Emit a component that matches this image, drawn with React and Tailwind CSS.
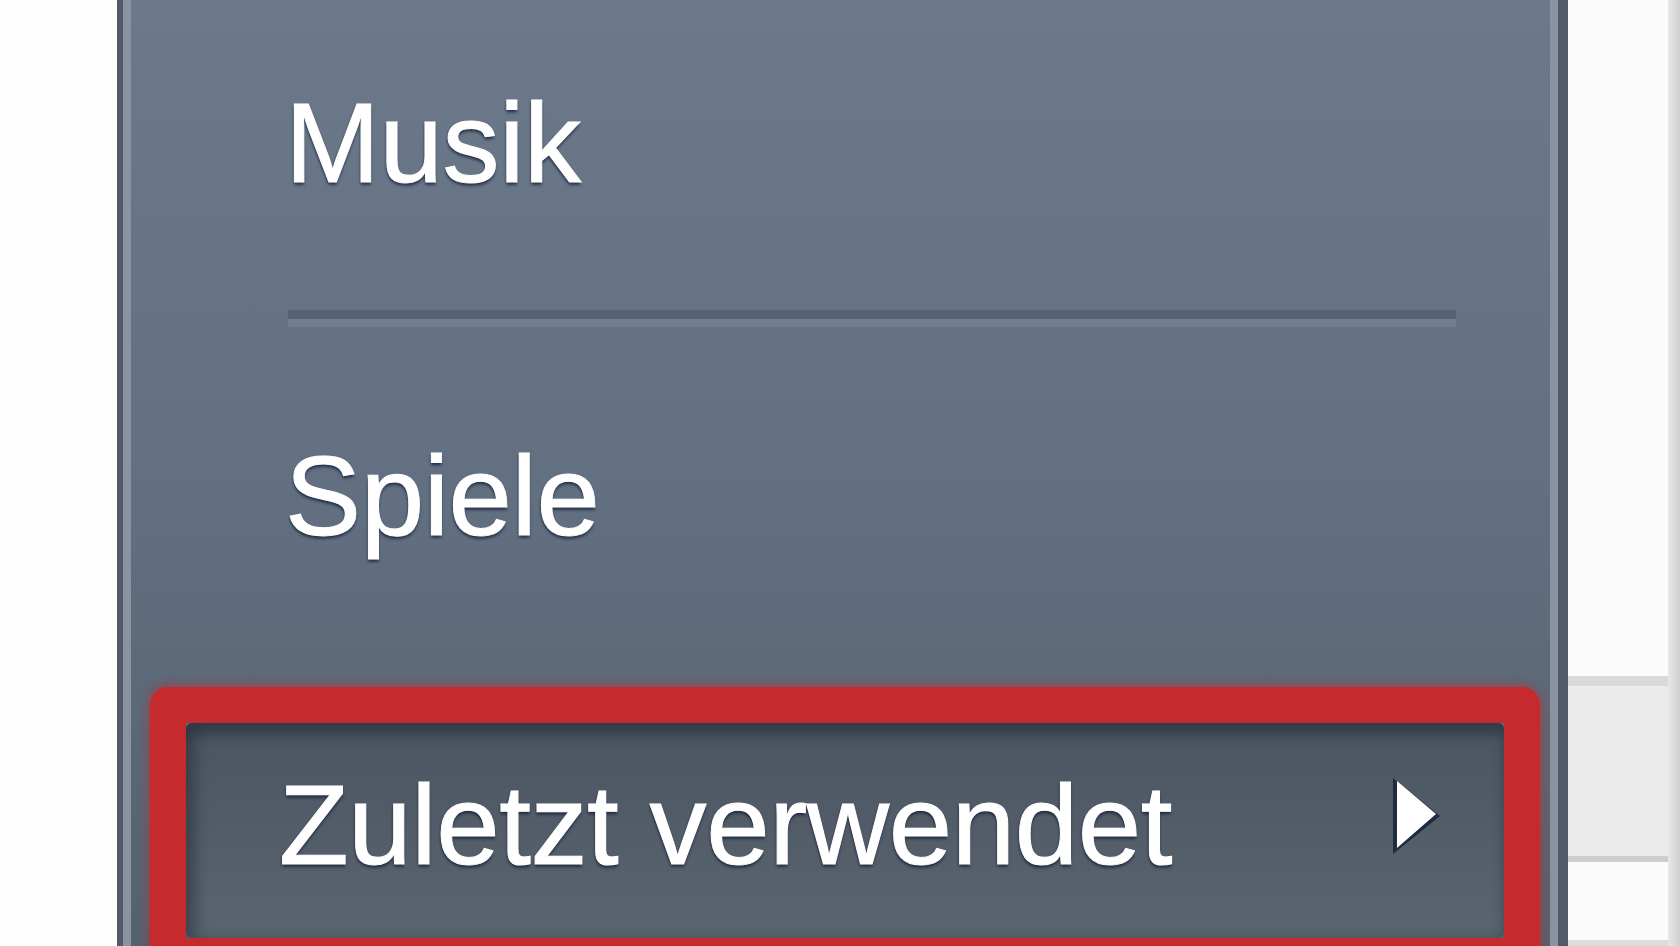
import React from "react";

const textShadow = "[text-shadow:0_3px_3px_rgba(12,22,48,0.6),-1px_1px_2px_rgba(12,22,48,0.4)] [-webkit-text-stroke:1px_#ffffff]";

export default function App() {
  return (
    <div className="w-[1680px] h-[946px] overflow-hidden flex bg-white font-['Liberation_Sans',Arial,sans-serif]">
      {/* left backdrop */}
      <div className="w-[117px] shrink-0 bg-[#fdfdfd]" />

      {/* start menu panel */}
      <div className="w-[1451px] shrink-0 h-full border-l-[6px] border-r-[10px] border-y-0 border-solid border-[#515a68]">
        <div className="h-full border-l-[8px] border-r-[8px] border-y-0 border-solid border-[#8a94a1] bg-linear-to-b from-[#6b798a] via-[#627082] to-[#56616e]">
          <div
            className={`pt-[86px] pl-[154px] text-[114px] leading-none tracking-[-0.4px] text-white ${textShadow}`}
          >
            Musik
          </div>

          <div className="mt-[110px] ml-[157px] mr-[94px] flex flex-col">
            <div className="h-[9px] bg-[#556175]" />
            <div className="h-[8px] bg-[#747e91]" />
          </div>

          <div
            className={`mt-[112px] pl-[154px] text-[114px] leading-none tracking-[-0.4px] text-white ${textShadow}`}
          >
            Spiele
          </div>

          {/* highlighted item with red frame */}
          <div className="mt-[134px] ml-[19px] mr-[10px] rounded-[18px] border-[36px] border-solid border-[#c52a2d] shadow-[0_0_8px_3px_rgba(200,40,40,0.45)]">
            <div className="h-[215px] rounded-[6px] bg-linear-to-b from-[#4a5561] to-[#5a6570] shadow-[inset_0_12px_12px_rgba(38,46,56,0.55),inset_12px_0_12px_rgba(38,46,56,0.35)] flex items-start justify-between pt-[45px] pl-[93px] pr-[62px]">
              <span
                className={`text-[114px] leading-none tracking-[-0.4px] text-white ${textShadow}`}
              >
                Zuletzt verwendet
              </span>
              <svg
                width="52"
                height="80"
                viewBox="0 0 52 80"
                className="mt-[8px]"
              >
                <polygon
                  points="3,2 3,78 50,40"
                  fill="rgba(16,26,52,0.75)"
                />
                <polygon points="7,5 7,72 46,38" fill="#ffffff" />
              </svg>
            </div>
          </div>
        </div>
      </div>

      {/* right backdrop (window behind) */}
      <div className="flex-1 flex h-full">
        <div className="flex-1 flex flex-col">
          <div className="h-[676px] bg-[#fbfbfb]" />
          <div className="h-[186px] bg-[#ebebeb] border-t-[10px] border-b-[6px] border-x-0 border-solid border-t-[#d9d9d9] border-b-[#cdcdcd]" />
          <div className="flex-1 bg-[#fbfbfb] border-b-[6px] border-x-0 border-t-0 border-solid border-[#dcdcdc]" />
        </div>
        <div className="w-[12px] bg-linear-to-r from-[#e8e8e8] to-[#cfcfcf]" />
      </div>
    </div>
  );
}
